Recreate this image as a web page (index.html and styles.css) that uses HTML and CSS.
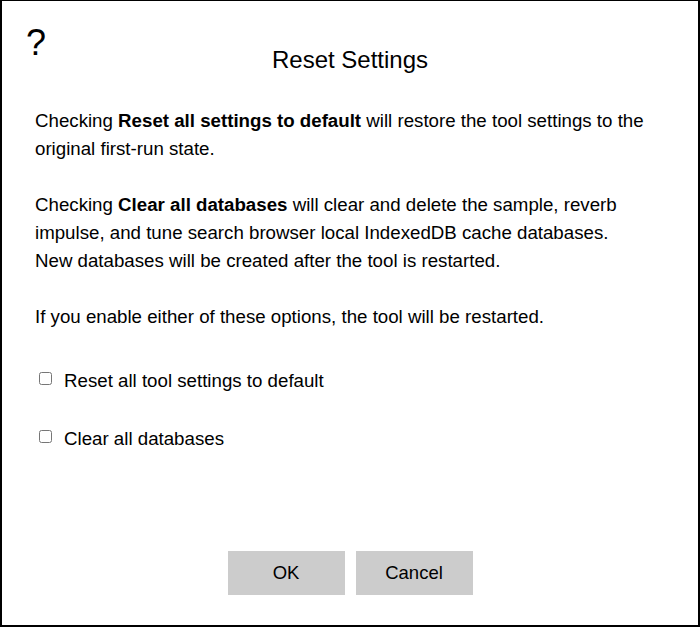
FILE: index.html
```html
<!DOCTYPE html>
<html>
<head>
<meta charset="utf-8">
<link rel="stylesheet" href="styles.css">
</head>
<body>
<div class="dialog">
  <div class="help">?</div>
  <h1 class="title">Reset Settings</h1>
  <div class="content">
    <p>Checking <b>Reset all settings to default</b> will restore the tool settings to the original first-run state.</p>
    <p>Checking <b>Clear all databases</b> will clear and delete the sample, reverb impulse, and tune search browser local IndexedDB cache databases. New databases will be created after the tool is restarted.</p>
    <p>If you enable either of these options, the tool will be restarted.</p>
    <label class="opt"><input type="checkbox" class="cb"><span>Reset all tool settings to default</span></label>
    <label class="opt"><input type="checkbox" class="cb"><span>Clear all databases</span></label>
  </div>
  <div class="buttons">
    <button class="btn">OK</button>
    <button class="btn">Cancel</button>
  </div>
</div>
</body>
</html>
```
FILE: styles.css
```css
html, body { margin: 0; padding: 0; background: #fff; }
body { font-family: "Liberation Sans", Arial, sans-serif; color: #000; }
.dialog {
  width: 700px; height: 627px; box-sizing: border-box;
  border: 2px solid #000; border-top-width: 1px;
  display: flex; flex-direction: column;
}
.help { font-size: 36px; line-height: 36px; height: 21px; margin: 24px 0 0 24px; }
.title { font-size: 24px; font-weight: normal; text-align: center; margin: 0; line-height: 28px; }
.content { padding: 0 51px 0 33px; font-size: 18.7px; line-height: 28px; }
.content p { margin: 33px 0 0 0; }
.content p + p { margin-top: 28px; }
.opt { display: flex; align-items: center; margin-top: 35.5px; gap: 12px; }
.opt + .opt { margin-top: 30.5px; }
.cb { width: 13px; height: 13px; margin: 0 0 5px 4px; }
.buttons { margin-top: auto; margin-bottom: 30px; display: flex; justify-content: center; gap: 11px; }
.btn {
  width: 117px; height: 44px; background: #cccccc; border: none;
  font-family: "Liberation Sans", Arial, sans-serif; font-size: 18.5px; color: #000; padding: 0;
}
```
